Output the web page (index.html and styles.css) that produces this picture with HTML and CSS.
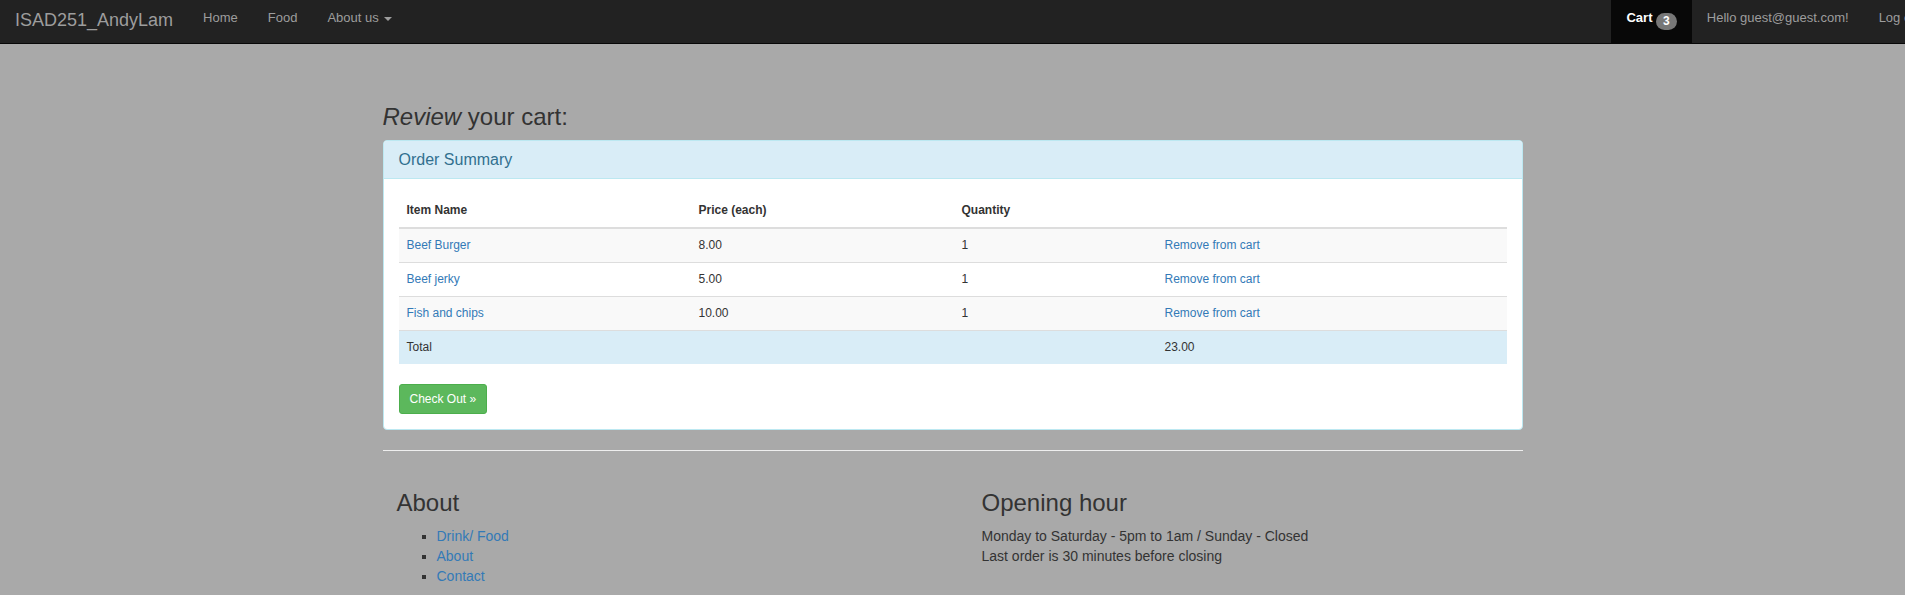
FILE: index.html
```html
<!DOCTYPE html>
<html lang="en">
<head>
<meta charset="utf-8">
<title>ISAD251_AndyLam - Cart</title>
<link rel="stylesheet" href="styles.css">
</head>
<body>
<nav class="navbar">
  <a class="brand" href="#">ISAD251_AndyLam</a>
  <ul class="nav">
    <li><a href="#">Home</a></li>
    <li><a href="#">Food</a></li>
    <li><a href="#">About us <span class="caret"></span></a></li>
  </ul>
  <ul class="nav nav-right">
    <li class="active"><a href="#">Cart <span class="badge">3</span></a></li>
    <li><a href="#">Hello guest@guest.com!</a></li>
    <li><a href="#">Log out</a></li>
  </ul>
</nav>

<main class="container">
  <h3 class="page-title"><em>Review</em> your cart:</h3>
  <div class="panel">
    <div class="panel-heading">
      <h3 class="panel-title">Order Summary</h3>
    </div>
    <div class="panel-body">
      <table class="table">
        <colgroup>
          <col class="c1"><col class="c2"><col class="c3"><col class="c4">
        </colgroup>
        <thead>
          <tr><th>Item Name</th><th>Price (each)</th><th>Quantity</th><th></th></tr>
        </thead>
        <tbody>
          <tr class="odd"><td><a href="#">Beef Burger</a></td><td>8.00</td><td>1</td><td><a href="#">Remove from cart</a></td></tr>
          <tr><td><a href="#">Beef jerky</a></td><td>5.00</td><td>1</td><td><a href="#">Remove from cart</a></td></tr>
          <tr class="odd"><td><a href="#">Fish and chips</a></td><td>10.00</td><td>1</td><td><a href="#">Remove from cart</a></td></tr>
          <tr class="info"><td>Total</td><td></td><td></td><td>23.00</td></tr>
        </tbody>
      </table>
      <a class="btn-success" href="#">Check Out &raquo;</a>
    </div>
  </div>
  <hr class="divider">
  <footer class="footer">
    <div class="footer-col">
      <h3 class="footer-title">About</h3>
      <ul class="footer-links">
        <li><a href="#">Drink/ Food</a></li>
        <li><a href="#">About</a></li>
        <li><a href="#">Contact</a></li>
      </ul>
    </div>
    <div class="footer-col">
      <h3 class="footer-title">Opening hour</h3>
      <p class="footer-text">Monday to Saturday - 5pm to 1am / Sunday - Closed<br>Last order is 30 minutes before closing</p>
    </div>
  </footer>
</main>
</body>
</html>
```

FILE: styles.css
```css
html {
  scrollbar-width: none;
}
html::-webkit-scrollbar {
  display: none;
}
body {
  margin: 0;
  background: #a9a9a9;
  color: #333;
  font-family: "Liberation Sans", Arial, Helvetica, sans-serif;
  font-size: 14px;
  line-height: 20px;
  overflow-x: hidden;
}
a {
  color: #337ab7;
  text-decoration: none;
}

/* navbar */
.navbar {
  display: flex;
  align-items: flex-start;
  height: 43px;
  background: #222;
  border-bottom: 1px solid #080808;
  overflow: hidden;
  padding-left: 15px;
}
.brand {
  color: #9d9d9d;
  font-size: 18px;
  line-height: 20px;
  padding: 10px 15px 13px 0;
  flex-shrink: 0;
}
.nav {
  display: flex;
  list-style: none;
  margin: 0;
  padding: 0;
  flex-shrink: 0;
}
.nav li a {
  display: block;
  color: #9d9d9d;
  font-size: 13px;
  line-height: 20px;
  padding: 8px 15px 15px;
  white-space: nowrap;
}
.nav-right {
  margin-left: auto;
  margin-right: -32px;
}
.nav li.active a {
  background: #080808;
  color: #fff;
  font-weight: bold;
}
.caret {
  display: inline-block;
  width: 0;
  height: 0;
  margin-left: 2px;
  vertical-align: middle;
  border-top: 4px solid #9d9d9d;
  border-left: 4px solid transparent;
  border-right: 4px solid transparent;
}
.badge {
  display: inline-block;
  padding: 3px 7px;
  font-size: 12px;
  font-weight: bold;
  line-height: 11px;
  color: #fff;
  text-align: center;
  vertical-align: -3px;
  background: #777;
  border-radius: 10px;
}

/* main */
.container {
  width: 1140px;
  margin: 0 auto;
  padding-top: 40px;
}
.page-title {
  font-size: 24px;
  font-weight: normal;
  line-height: 1.1;
  margin: 20px 0 10px;
}
.panel {
  background: #fff;
  border: 1px solid #bce8f1;
  border-radius: 4px;
  margin-bottom: 20px;
}
.panel-heading {
  background: #d9edf7;
  color: #31708f;
  border-bottom: 1px solid #bce8f1;
  border-radius: 3px 3px 0 0;
  padding: 10px 15px;
}
.panel-title {
  margin: 0;
  font-size: 16px;
  font-weight: normal;
  line-height: 17px;
}
.panel-body {
  padding: 15px;
}
.table {
  width: 100%;
  table-layout: fixed;
  border-collapse: collapse;
  margin-bottom: 20px;
  font-size: 12px;
}
.c1 { width: 292px; }
.c2 { width: 263px; }
.c3 { width: 203px; }
.c4 { width: 350px; }
.table th,
.table td {
  padding: 8px;
  line-height: 17px;
  text-align: left;
  vertical-align: top;
  border-top: 1px solid #ddd;
}
.table th {
  border-top: 0;
  border-bottom: 2px solid #ddd;
  font-weight: bold;
}
.table thead + tbody tr:first-child td {
  border-top: 0;
}
.table tr.odd td {
  background: #f9f9f9;
}
.table tr.info td {
  background: #d9edf7;
}
.btn-success {
  display: inline-block;
  background: #5cb85c;
  border: 1px solid #4cae4c;
  color: #fff;
  border-radius: 3px;
  font-size: 12px;
  line-height: 18px;
  padding: 5px 10px;
}
.divider {
  margin: 20px 0;
  border: 0;
  border-top: 1px solid #eee;
}

/* footer */
.footer {
  display: grid;
  grid-template-columns: 1fr 1fr;
  column-gap: 30px;
}
.footer-col {
  padding-left: 14px;
}
.footer-title {
  font-size: 24px;
  font-weight: normal;
  line-height: 1.1;
  margin: 19px 0 9px;
}
.footer-links {
  list-style: square;
  margin: 0 0 10px;
  padding-left: 40px;
}
.footer-text {
  margin: 0 0 10px;
}
```
